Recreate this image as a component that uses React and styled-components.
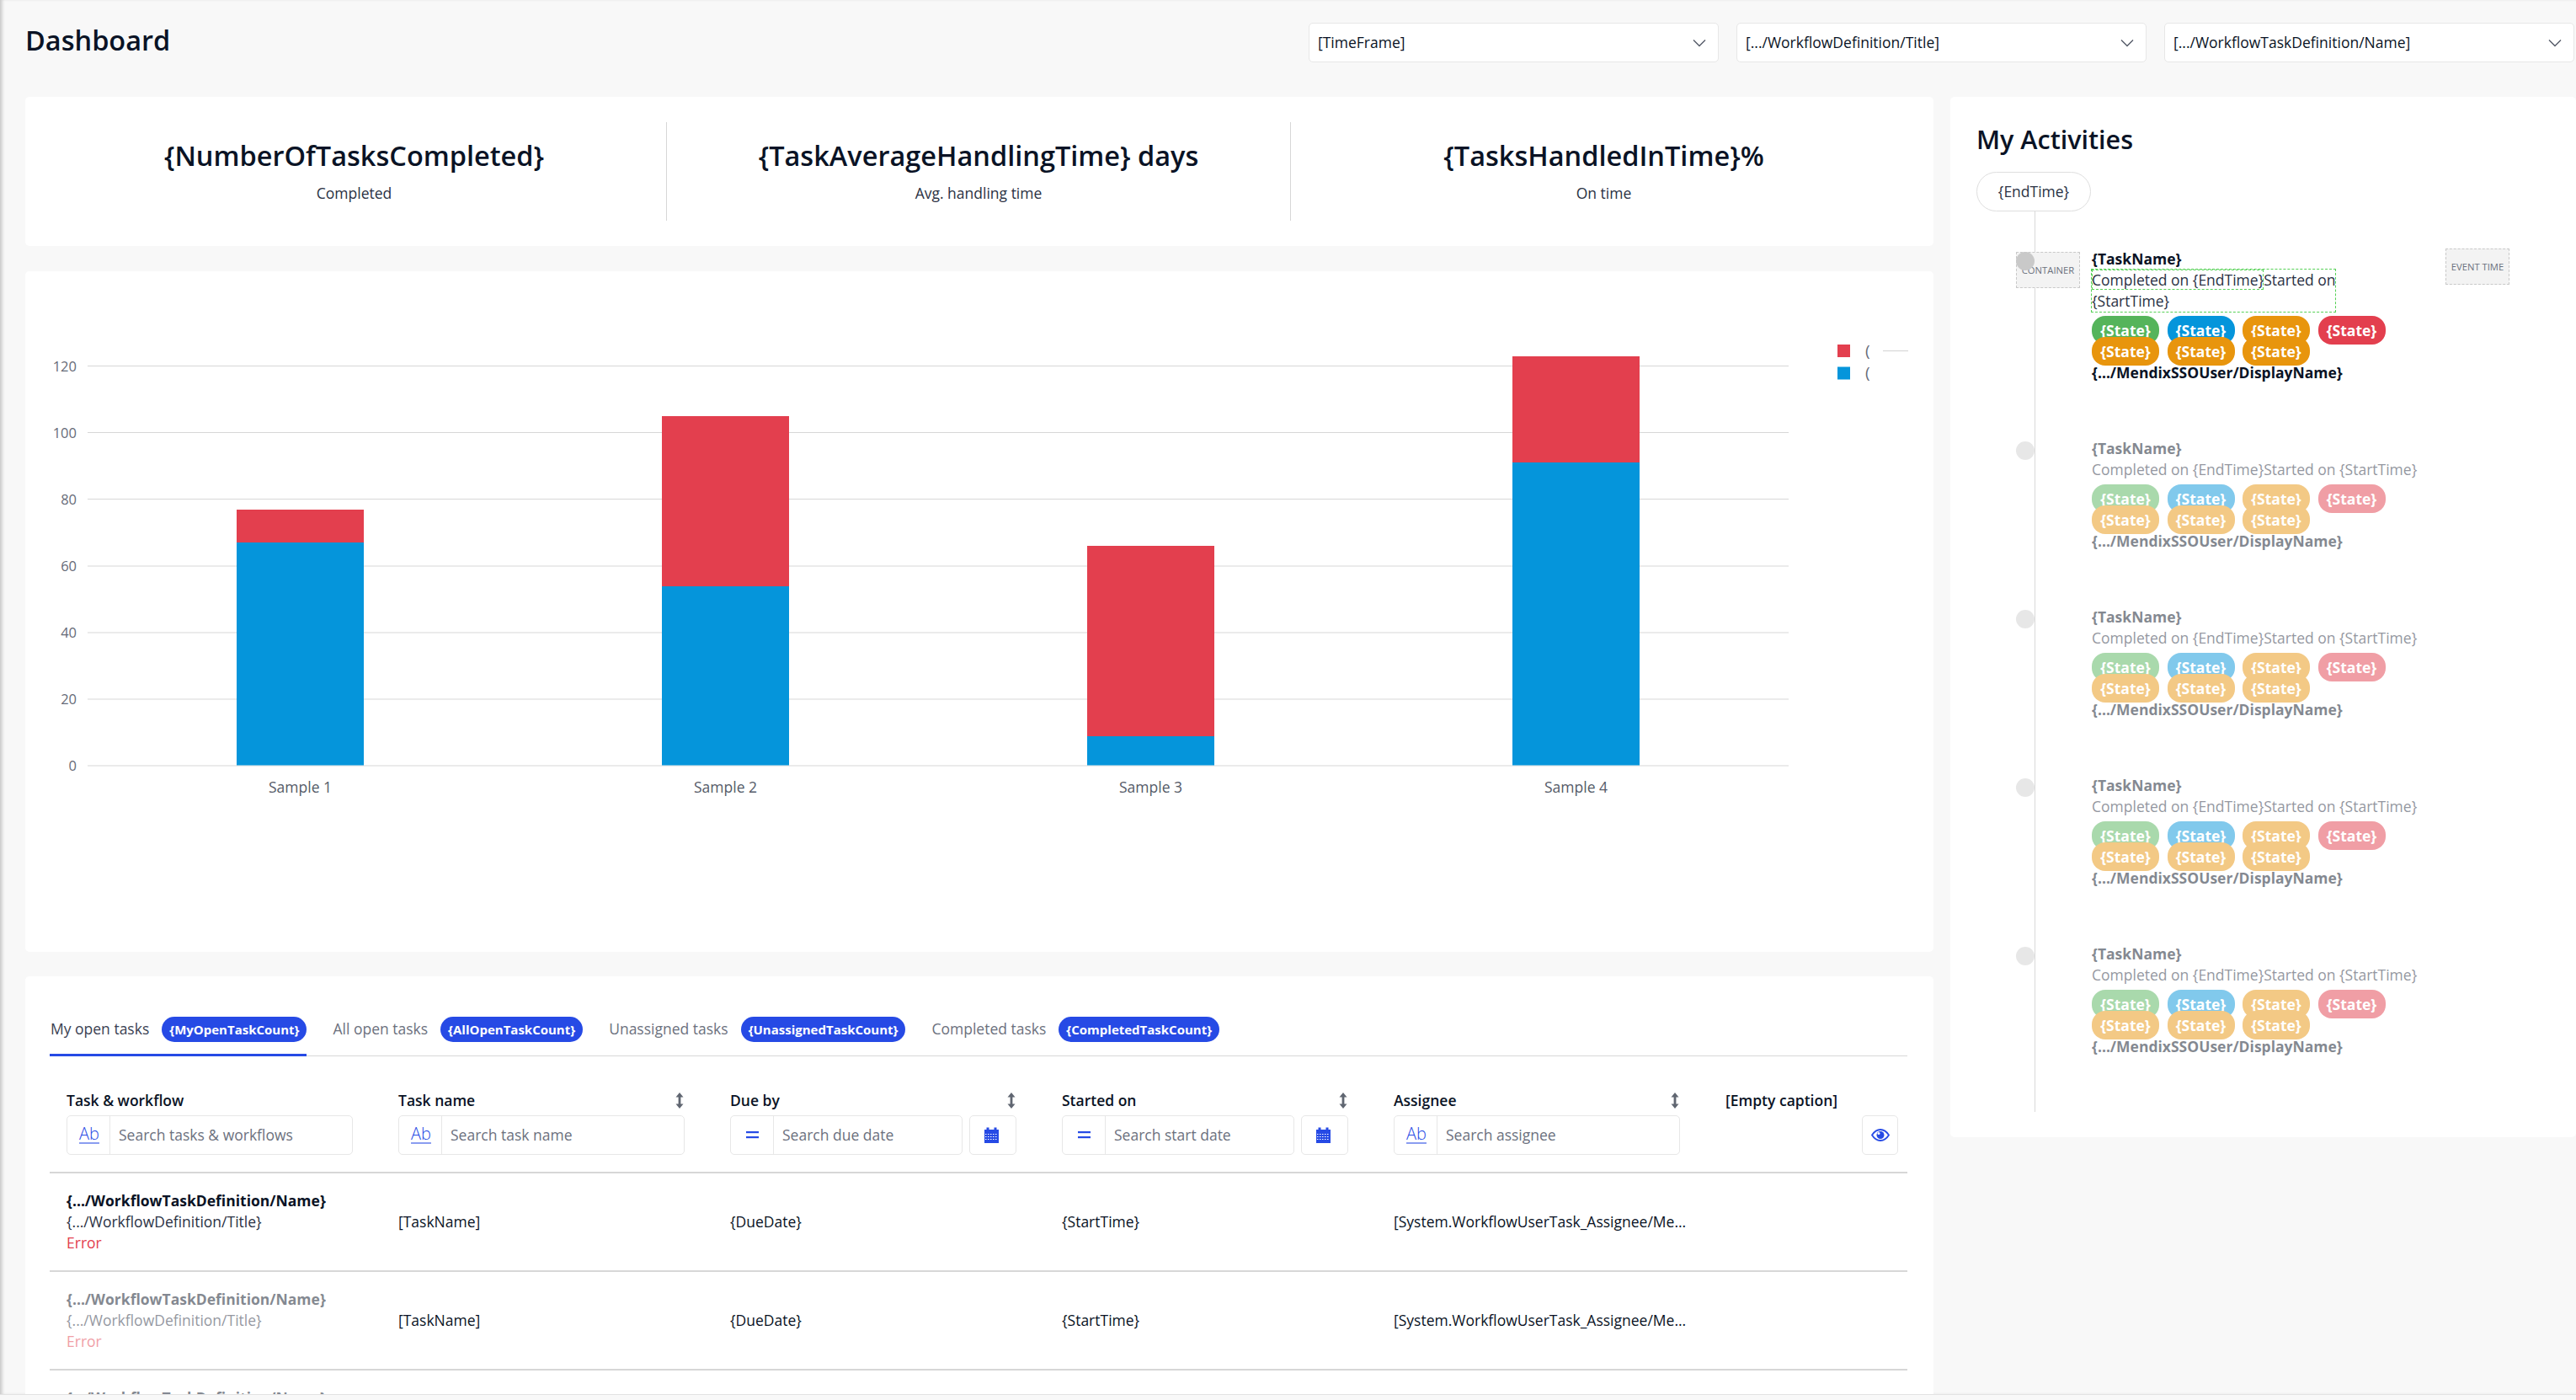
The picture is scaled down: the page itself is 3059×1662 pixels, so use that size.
import React from "react";
import styled, { createGlobalStyle } from "styled-components";

const Global = createGlobalStyle`
  html, body { margin: 0; padding: 0; background: #f8f8f8; }
  body { font-family: "Open Sans", "Liberation Sans", sans-serif; font-size: 17.5px; line-height: 25px; color: #0a1325; }
  * { box-sizing: border-box; }
`;

const BLUE = "#264ae5";
const LINE = "#d7d7d7";
const EDGE = "#e7e7e7";

const Page = styled.div`
  width: 3059px;
  height: 1656px;
  overflow: hidden;
  background: #f8f8f8;
  border-bottom: 1px solid #e2e2e2;
  box-shadow: inset 4px 0 4px -2px rgba(0, 0, 0, 0.22);
`;
const Header = styled.header`
  height: 115px;
  display: flex;
  justify-content: space-between;
  padding: 27px 2px 0 30px;
`;
const Title = styled.h1`
  margin: 0;
  font-size: 32.5px;
  line-height: 42px;
  font-weight: 600;
`;
const Filters = styled.div`
  display: flex;
  gap: 21px;
`;
const Select = styled.div`
  width: 487px;
  height: 47px;
  padding: 0 14px 0 10px;
  display: flex;
  align-items: center;
  justify-content: space-between;
  background: #fff;
  border: 1px solid ${EDGE};
  border-radius: 5px;
`;
const Body = styled.main`
  display: grid;
  grid-template-columns: 2266px 743px;
  gap: 20px;
  padding-left: 30px;
  align-items: start;
`;
const LeftColumn = styled.div`
  display: flex;
  flex-direction: column;
`;
const Card = styled.section`
  background: #fff;
  border-radius: 5px;
`;
const KpiCard = styled(Card)`
  height: 177px;
  padding: 30px 20px;
  display: grid;
  grid-template-columns: 742px 741px 1fr;
`;
const Kpi = styled.div`
  display: flex;
  flex-direction: column;
  align-items: center;
  padding-top: 19px;
  border-right: ${(p) => (p.$last ? "none" : `1px solid ${LINE}`)};
`;
const KpiValue = styled.div`
  font-size: 32.5px;
  line-height: 42px;
  font-weight: 600;
`;
const KpiLabel = styled.div`
  margin-top: 11px;
  color: #2b3244;
`;
const ChartCard = styled(Card)`
  height: 808px;
  margin-top: 30px;
`;
const ChartSvg = styled.svg`
  display: block;
  font-family: "Open Sans", sans-serif;
  font-size: 16.5px;
`;
const SampleLabel = styled.text`
  font-size: 17.5px;
  fill: #555b68;
  text-anchor: middle;
`;
const LegendMark = styled.text`
  font-size: 19px;
  fill: #666b78;
`;
const TableCard = styled(Card)`
  margin-top: 29px;
  padding: 48px 31px 0 29px;
  height: 600px;
`;
const Tabs = styled.div`
  display: flex;
  gap: 30px;
  border-bottom: 1px solid ${LINE};
`;
const Tab = styled.div`
  display: flex;
  align-items: flex-start;
  gap: 15px;
  height: 47px;
  margin-bottom: -1px;
  padding-left: 1px;
  border-bottom: 3px solid ${(p) => (p.$active ? BLUE : "transparent")};
  color: ${(p) => (p.$active ? "#3a4152" : "#6c717e")};
`;
const TabLabel = styled.span`
  line-height: 28px;
`;
const Badge = styled.span`
  height: 30px;
  padding: 0 9px;
  border-radius: 15px;
  background: ${BLUE};
  color: #fff;
  font-size: 15px;
  font-weight: 700;
  line-height: 30px;
`;
const Grid = styled.div`
  display: grid;
  grid-template-columns: repeat(5, 394px) 236px;
`;
const HeadCell = styled.div`
  padding: 40px 34px 20px 20px;
  border-bottom: 2px solid ${LINE};
`;
const EyeCell = styled(HeadCell)`
  padding-right: 11px;
`;
const HeadTop = styled.div`
  display: flex;
  justify-content: space-between;
  align-items: center;
  height: 25px;
  margin-bottom: 5px;
  font-weight: 600;
`;
const SortSlot = styled.span`
  display: flex;
  margin-right: 1px;
`;
const EyeRow = styled.div`
  display: flex;
  justify-content: flex-end;
`;
const FilterRow = styled.div`
  display: flex;
  gap: 8px;
`;
const SearchBox = styled.div`
  flex: 1;
  height: 47px;
  display: flex;
  align-items: center;
  border: 1px solid ${EDGE};
  border-radius: 5px;
`;
const Prefix = styled.span`
  width: 51px;
  height: 100%;
  flex: none;
  display: flex;
  align-items: center;
  justify-content: center;
  border-right: 1px solid ${EDGE};
`;
const AbMark = styled.span`
  color: ${BLUE};
  font-size: 20px;
  line-height: 22px;
  font-weight: 300;
  text-decoration: underline;
  text-decoration-color: #8a9df0;
  text-underline-offset: 3px;
  margin: -4px 0 0 2px;
`;
const Placeholder = styled.span`
  padding-left: 10px;
  color: #6c717e;
`;
const IconButton = styled.div`
  width: ${(p) => p.$w}px;
  height: 47px;
  flex: none;
  display: flex;
  align-items: center;
  justify-content: center;
  padding-right: ${(p) => p.$shift || 0}px;
  border: 1px solid ${EDGE};
  border-radius: 5px;
`;
const Cell = styled.div`
  height: 117px;
  padding: 0 26px 0 20px;
  display: flex;
  flex-direction: column;
  justify-content: center;
  border-bottom: 2px solid ${LINE};
  min-width: 0;
`;
const CellGroup = styled.div`
  opacity: ${(p) => (p.$dim ? 0.5 : 1)};
`;
const TaskTitle = styled.div`
  font-weight: 700;
`;
const WorkflowName = styled.div`
  color: #2b3244;
`;
const ErrorText = styled.div`
  color: #e33f4e;
`;
const Clip = styled.div`
  white-space: nowrap;
  overflow: hidden;
  text-overflow: ellipsis;
`;
const ActivityCard = styled(Card)`
  height: 1235px;
  padding: 29px 0 0 31px;
`;
const ActivityTitle = styled.h2`
  margin: 0;
  font-size: 30.5px;
  line-height: 42px;
  font-weight: 600;
`;
const TimePill = styled.div`
  width: 136px;
  height: 47px;
  margin-top: 18px;
  border: 1px solid #dedede;
  border-radius: 24px;
  background: #fff;
  display: flex;
  align-items: center;
  justify-content: center;
  color: #2b3244;
`;
const Timeline = styled.div`
  position: relative;
  padding: 44px 0 0 47px;
  &::before {
    content: "";
    position: absolute;
    left: 69px;
    top: 0;
    height: 1069px;
    width: 1px;
    background: #d9d9d9;
  }
`;
const Item = styled.article`
  position: relative;
  padding: 0 0 65px 90px;
`;
const Dot = styled.span`
  position: absolute;
  z-index: 1;
  left: 0;
  top: 4px;
  width: 22px;
  height: 22px;
  border-radius: 50%;
  background: ${(p) => (p.$dim ? "#e7e7e7" : "#c9c9c9")};
`;
const Placeholderbox = styled.div`
  position: absolute;
  left: ${(p) => p.$left}px;
  top: ${(p) => p.$top}px;
  width: 76px;
  height: 43px;
  display: flex;
  align-items: center;
  justify-content: center;
  background: #f3f3f3;
  border: 1px dashed #c9c9c9;
  font-size: 11.25px;
  color: #6c717e;
  white-space: nowrap;
`;
const ItemBody = styled.div`
  opacity: ${(p) => (p.$dim ? 0.5 : 1)};
`;
const ItemName = styled.div`
  font-weight: 700;
`;
const ItemText = styled.div`
  position: relative;
  width: ${(p) => (p.$narrow ? "289px" : "auto")};
  white-space: nowrap;
  outline: ${(p) => (p.$narrow ? "1px dashed #56d156" : "none")};
  color: #2b3244;
`;
const SelectedPart = styled.span`
  position: absolute;
  left: 0;
  top: 0;
  width: 204px;
  height: 24px;
  border: 1px dashed #56d156;
`;
const Pills = styled.div`
  width: 360px;
  margin-top: 10px;
  display: flex;
  flex-wrap: wrap;
  gap: 0 9.5px;
`;
const Pill = styled.span`
  width: 80px;
  height: 34px;
  margin: -5px 0 -4px;
  border-radius: 16px;
  background: ${(p) => p.$color};
  color: #fff;
  font-weight: 700;
  line-height: 34px;
  text-align: center;
`;

const Chevron = () => (
  <svg width="16" height="10" viewBox="0 0 16 10" fill="none" stroke="#555b68" strokeWidth="1.4">
    <path d="M1 1.5l7 7 7-7" />
  </svg>
);
const Sort = () => (
  <SortSlot>
    <svg width="10" height="19" viewBox="0 0 10 19" fill="#606671">
      <path d="M5 0L9.5 5.5H6.4V13.5H9.5L5 19L.5 13.5H3.6V5.5H.5Z" />
    </svg>
  </SortSlot>
);
const EqualIcon = () => (
  <svg width="15" height="9" viewBox="0 0 15 9" fill={BLUE}>
    <rect width="15" height="2.2" />
    <rect y="6" width="15" height="2.2" />
  </svg>
);
const Calendar = () => (
  <svg width="17" height="19" viewBox="0 0 17 19">
    <path fill={BLUE} d="M0 3h2.5V.5h3V3h6V.5h3V3H17v16H0z" />
    <path stroke="#fff" strokeWidth="1" strokeDasharray="1.5 1.5" d="M1 8.5h15M1 11.5h15M1 14.5h15" fill="none" />
  </svg>
);
const Eye = () => (
  <svg width="22" height="15" viewBox="0 0 22 15">
    <path d="M1 7.5C4 2.8 7.300 1 11 1s7 1.800 10 6.500C18 12.200 14.700 14 11 14S4 12.200 1 7.500z" fill="none" stroke={BLUE} strokeWidth="1.8" />
    <circle cx="11" cy="7.500" r="4.500" fill={BLUE} />
    <circle cx="9" cy="5.500" r="1.500" fill="#fff" />
  </svg>
);

const RED = "#e33f4e";
const SKY = "#0595db";
const ORANGE = "#e8950d";
const GREEN = "#55b45b";

const ticks = [
  [120, 434.5],
  [100, 513.5],
  [80, 592.5],
  [60, 672],
  [40, 751],
  [20, 830],
  [0, 909],
];
const bars = [
  { name: "Sample 1", x: 281, top: 605, mid: 644 },
  { name: "Sample 2", x: 786, top: 494, mid: 696 },
  { name: "Sample 3", x: 1291, top: 648, mid: 874 },
  { name: "Sample 4", x: 1796, top: 423, mid: 549 },
];

const Chart = () => (
  <ChartSvg width="2266" height="808" viewBox="30 322 2266 808">
    {ticks.map(([v, y]) => (
      <g key={v}>
        <line x1="104" x2="2124" y1={y} y2={y} stroke={LINE} strokeWidth="1.2" />
        <text x="91" y={y + 6} textAnchor="end" fill="#666b78">{v}</text>
      </g>
    ))}
    {bars.map((b) => (
      <g key={b.name}>
        <rect x={b.x} y={b.top} width="151" height={b.mid - b.top} fill={RED} />
        <rect x={b.x} y={b.mid} width="151" height={908.5 - b.mid} fill={SKY} />
        <SampleLabel x={b.x + 75.5} y="941">{b.name}</SampleLabel>
      </g>
    ))}
    <rect x="2182" y="409" width="15" height="15" fill={RED} />
    <rect x="2182" y="435.500" width="15" height="15" fill={SKY} />
    <LegendMark x="2215" y="423">(</LegendMark>
    <LegendMark x="2215" y="449">(</LegendMark>
    <line x1="2236" x2="2266" y1="416.500" y2="416.500" stroke={LINE} strokeWidth="1.2" />
  </ChartSvg>
);

const stateColors = [GREEN, SKY, ORANGE, RED, ORANGE, ORANGE, ORANGE];

const Activity = ({ first }) => (
  <Item>
    <Dot $dim={!first} />
    {first && <Placeholderbox $left={0} $top={4}>CONTAINER</Placeholderbox>}
    {first && <Placeholderbox $left={510} $top={0}>EVENT TIME</Placeholderbox>}
    <ItemBody $dim={!first}>
      <ItemName>{"{TaskName}"}</ItemName>
      <ItemText $narrow={first}>
        {first && <SelectedPart />}
        {"Completed on {EndTime}Started on"}
        {first ? <br /> : " "}
        {"{StartTime}"}
      </ItemText>
      <Pills>
        {stateColors.map((c, i) => (
          <Pill key={i} $color={c}>{"{State}"}</Pill>
        ))}
      </Pills>
      <ItemName>{"{.../MendixSSOUser/DisplayName}"}</ItemName>
    </ItemBody>
  </Item>
);

const TextFilter = ({ label }) => (
  <FilterRow>
    <SearchBox>
      <Prefix><AbMark>Ab</AbMark></Prefix>
      <Placeholder>{label}</Placeholder>
    </SearchBox>
  </FilterRow>
);
const DateFilter = ({ label }) => (
  <FilterRow>
    <SearchBox>
      <Prefix><EqualIcon /></Prefix>
      <Placeholder>{label}</Placeholder>
    </SearchBox>
    <IconButton $w={56} $shift={3}><Calendar /></IconButton>
  </FilterRow>
);

const Row = ({ dim }) => (
  <>
    <Cell>
      <CellGroup $dim={dim}>
        <TaskTitle>{"{.../WorkflowTaskDefinition/Name}"}</TaskTitle>
        <WorkflowName>{"{.../WorkflowDefinition/Title}"}</WorkflowName>
        <ErrorText>Error</ErrorText>
      </CellGroup>
    </Cell>
    <Cell>[TaskName]</Cell>
    <Cell>{"{DueDate}"}</Cell>
    <Cell>{"{StartTime}"}</Cell>
    <Cell><Clip>[System.WorkflowUserTask_Assignee/MendixSSOUser/DisplayName]</Clip></Cell>
    <Cell />
  </>
);

export default function App() {
  return (
    <Page>
      <Global />
      <Header>
        <Title>Dashboard</Title>
        <Filters>
          {["[TimeFrame]", "[.../WorkflowDefinition/Title]", "[.../WorkflowTaskDefinition/Name]"].map((t) => (
            <Select key={t}>{t}<Chevron /></Select>
          ))}
        </Filters>
      </Header>
      <Body>
        <LeftColumn>
          <KpiCard>
            <Kpi>
              <KpiValue>{"{NumberOfTasksCompleted}"}</KpiValue>
              <KpiLabel>Completed</KpiLabel>
            </Kpi>
            <Kpi>
              <KpiValue>{"{TaskAverageHandlingTime} days"}</KpiValue>
              <KpiLabel>Avg. handling time</KpiLabel>
            </Kpi>
            <Kpi $last>
              <KpiValue>{"{TasksHandledInTime}%"}</KpiValue>
              <KpiLabel>On time</KpiLabel>
            </Kpi>
          </KpiCard>
          <ChartCard><Chart /></ChartCard>
          <TableCard>
            <Tabs>
              <Tab $active><TabLabel>My open tasks</TabLabel><Badge>{"{MyOpenTaskCount}"}</Badge></Tab>
              <Tab><TabLabel>All open tasks</TabLabel><Badge>{"{AllOpenTaskCount}"}</Badge></Tab>
              <Tab><TabLabel>Unassigned tasks</TabLabel><Badge>{"{UnassignedTaskCount}"}</Badge></Tab>
              <Tab><TabLabel>Completed tasks</TabLabel><Badge>{"{CompletedTaskCount}"}</Badge></Tab>
            </Tabs>
            <Grid>
              <HeadCell>
                <HeadTop>Task &amp; workflow</HeadTop>
                <TextFilter label="Search tasks & workflows" />
              </HeadCell>
              <HeadCell>
                <HeadTop>Task name<Sort /></HeadTop>
                <TextFilter label="Search task name" />
              </HeadCell>
              <HeadCell>
                <HeadTop>Due by<Sort /></HeadTop>
                <DateFilter label="Search due date" />
              </HeadCell>
              <HeadCell>
                <HeadTop>Started on<Sort /></HeadTop>
                <DateFilter label="Search start date" />
              </HeadCell>
              <HeadCell>
                <HeadTop>Assignee<Sort /></HeadTop>
                <TextFilter label="Search assignee" />
              </HeadCell>
              <EyeCell>
                <HeadTop>[Empty caption]</HeadTop>
                <EyeRow><IconButton $w={43}><Eye /></IconButton></EyeRow>
              </EyeCell>
              <Row />
              <Row dim />
              <Row dim />
            </Grid>
          </TableCard>
        </LeftColumn>
        <ActivityCard>
          <ActivityTitle>My Activities</ActivityTitle>
          <TimePill>{"{EndTime}"}</TimePill>
          <Timeline>
            <Activity first />
            <Activity />
            <Activity />
            <Activity />
            <Activity />
          </Timeline>
        </ActivityCard>
      </Body>
    </Page>
  );
}
